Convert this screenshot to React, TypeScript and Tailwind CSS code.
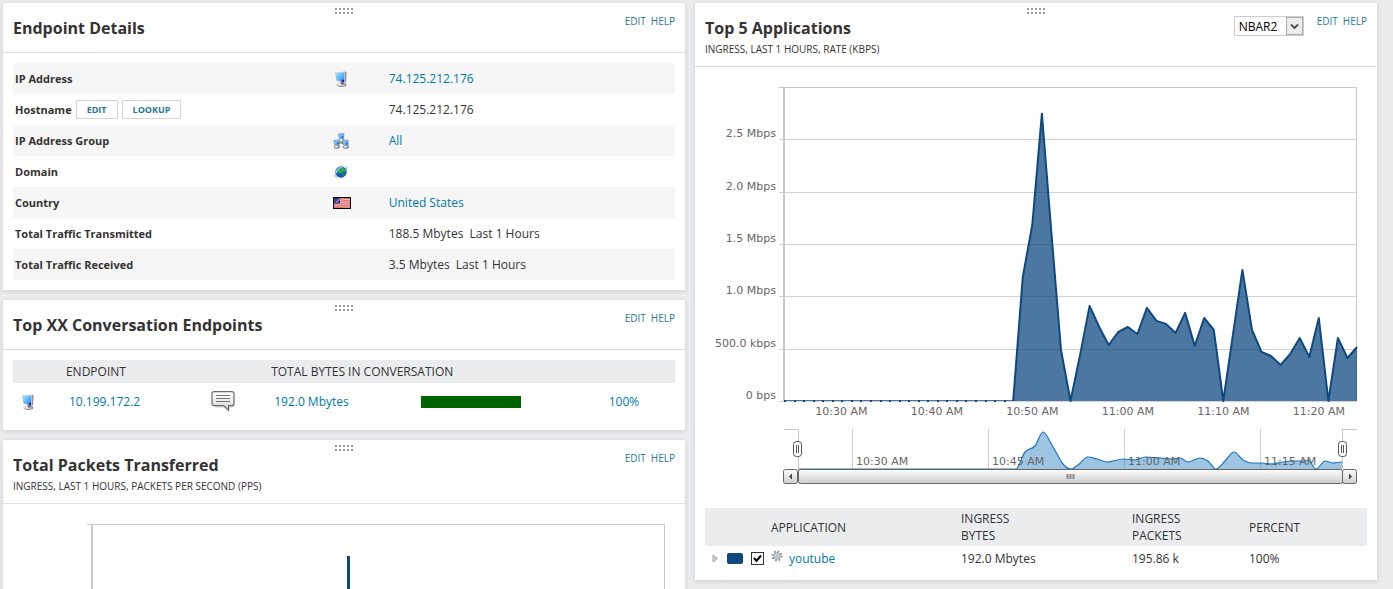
import React from 'react';

type PanelProps = {
    title: string;
    subtitle?: string;
    tools?: React.ReactNode;
    children: React.ReactNode;
};

const linkClass = 'text-[#0079aa] hover:underline';

const DragHandle: React.FC = () => (
    <svg
        className="absolute top-[5px] left-1/2 -translate-x-1/2"
        width="18"
        height="6"
        fill="#999"
        shapeRendering="crispEdges"
        aria-hidden="true"
    >
        {[0, 4, 8, 12, 16].map((x) => (
            <g key={x}>
                <rect x={x} y="0" width="2" height="2" />
                <rect x={x} y="4" width="2" height="2" />
            </g>
        ))}
    </svg>
);

const Panel: React.FC<PanelProps> = ({ title, subtitle, tools, children }) => (
    <section className="bg-white shadow-[0_1px_5px_rgba(0,0,0,0.15)]">
        <header className="relative flex justify-between border-b border-[#dfe0e1] px-[10px] pt-[13px] pb-[10px]">
            <DragHandle />
            <div>
                <h2 className="pb-[2px] text-[16px] leading-6 font-bold text-[#333]">{title}</h2>
                {subtitle && <p className="text-[10px] leading-[14px] uppercase">{subtitle}</p>}
            </div>
            <div className="flex items-start">
                {tools}
                <nav className="flex gap-[5px] text-[10px] leading-[10px] text-[#297994]">
                    <a href="#edit" className="hover:underline">EDIT</a>
                    <a href="#help" className="hover:underline">HELP</a>
                </nav>
            </div>
        </header>
        <div className="p-[10px]">{children}</div>
    </section>
);

const ComputerIcon: React.FC = () => (
    <svg width="16" height="16" viewBox="0 0 16 16" aria-hidden="true">
        <defs>
            <linearGradient id="screen" x1="0" y1="0" x2="1" y2="1">
                <stop offset="0" stopColor="#a4e2ff" />
                <stop offset="0.6" stopColor="#4fb0fa" />
                <stop offset="1" stopColor="#2a6be0" />
            </linearGradient>
        </defs>
        <ellipse cx="8.5" cy="13.8" rx="5" ry="2.1" fill="#8c8c8c" />
        <ellipse cx="7.6" cy="13.2" rx="4.2" ry="1.6" fill="#e2e2e2" />
        <path d="M7.5 10.5h3l1 2.900h-3.500z" fill="#666" />
        <path d="M11.800 .6l1.800 .8-.6 9.600-2.200 1.400z" fill="#8a9096" />
        <path d="M2 1.600L12.200 .5l-.6 11.200L3.400 10z" fill="#c2cad1" />
        <path d="M2.800 2.500l8.600-.9-.5 9.200-7-1.500z" fill="url(#screen)" />
        <path d="M8.600 8.800l2.400.5-.2 2-2-.5z" fill="#2317a8" />
    </svg>
);

const GroupIcon: React.FC = () => (
    <svg width="16" height="16" viewBox="0 0 16 16" aria-hidden="true">
        <path d="M8 6v4M8 9l-4 3M8 9l4 3" stroke="#4d4030" strokeWidth="1.4" />
        <path d="M6.8 8.4h2.4v2.2H6.8z" fill="#e5a229" />
        {[[4.8, 0], [0.2, 6.4], [9.2, 6.4]].map(([x, y]) => (
            <g key={x} transform={`translate(${x} ${y})`}>
                <ellipse cx="3.6" cy="7.4" rx="3.1" ry="2" fill="#858585" />
                <ellipse cx="3.2" cy="7.2" rx="2" ry="1.200" fill="#e4e4e4" />
                <path d="M.1 .5L6.500 .1l-.2 6.400-5.300-.7z" fill="#98a4b0" />
                <path d="M.8 1.100L5.700 .8l-.2 4.900-4-.6z" fill="#6fbcff" />
                <path d="M3.600 3l2-.4-.1 3-1.900-.3z" fill="#2d6fe0" />
            </g>
        ))}
    </svg>
);

const GlobeIcon: React.FC = () => (
    <svg width="16" height="16" viewBox="0 0 16 16" aria-hidden="true">
        <circle cx="8" cy="8" r="5.700" fill="#1757b4" />
        <path d="M2.600 8C3.600 3.800 7.600 1.600 10.800 3 8 4 5 6 3.600 10z" fill="#7cc8f7" />
        <path d="M6.600 4.400l3-.9 2.400 1.500-.2 2.600-2.200.4-.5 2-1.900-1-1.800.3-.6-2z" fill="#2fa548" />
        <path d="M9.600 9.600l2.200-.6.300 1.400-1.900 2-1.100-.8z" fill="#168a57" />
        <path d="M13.600 2.400c.9 1.600-1 4.200-1.700 5.200M2.200 10.200c-.6 2.200.2 3.200 2.600 2.400" fill="none" stroke="#55b3ee" strokeWidth="1" />
    </svg>
);

const FlagIcon: React.FC = () => (
    <svg width="18" height="12" viewBox="0 0 18 12" aria-hidden="true">
        <rect width="18" height="12" fill="#f0b9b7" />
        <path d="M1 2.2q4 1 8-.2t8-.2M1 4.4q4 1 8-.2t8-.2M1 6.6q4 1 8-.2t8-.2M1 8.8q4 1 8-.2t8-.2M1 10.6q4 .6 8-.2t8-.2" fill="none" stroke="#d76463" strokeWidth="1" />
        <path d="M1 1h6v5.600H1z" fill="#3e3f8f" />
        <path d="M3 5.600l3.400-3.800" stroke="#8d8fca" strokeWidth="1.2" />
        <rect x="0.5" y="0.5" width="17" height="11" fill="none" stroke="#000" />
    </svg>
);

const SpeechIcon: React.FC = () => (
    <svg width="24" height="22" viewBox="0 0 24 22" aria-hidden="true">
        <defs>
            <linearGradient id="bubble" x1="0" y1="0" x2="0" y2="1">
                <stop offset="0" stopColor="#fff" />
                <stop offset="1" stopColor="#d6d6d6" />
            </linearGradient>
        </defs>
        <path d="M3.500 16H13l5 4.200V16h3q2-.5 2-2" fill="none" stroke="#ccc" />
        <path
            d="M3 .6h18a2 2 0 0 1 2 2v10a2 2 0 0 1-2 2h-3.500v4.500L12.500 14.600H3a2 2 0 0 1-2-2V2.600a2 2 0 0 1 2-2z"
            fill="url(#bubble)"
            stroke="#6a6a6a"
            strokeWidth="1.2"
        />
        <path d="M5 4.500h14M5 7.500h14M5 10.500h14" stroke="#777" />
    </svg>
);

const GearIcon: React.FC = () => (
    <svg width="12" height="12" viewBox="0 0 12 12" aria-hidden="true">
        <circle cx="6" cy="6" r="4.600" fill="none" stroke="#8a9a9e" strokeWidth="2" strokeDasharray="1.800 1.810" />
        <circle cx="6" cy="6" r="3.200" fill="#dbe3e5" stroke="#8a9a9e" />
        <circle cx="6" cy="6" r="1.200" fill="#fff" stroke="#8a9a9e" strokeWidth="0.800" />
    </svg>
);

type DetailRow = {
    label: string;
    icon?: React.ReactNode;
    value?: string;
    href?: string;
    actions?: string[];
};

const details: DetailRow[] = [
    { label: 'IP Address', icon: <ComputerIcon />, value: '74.125.212.176', href: '#ip' },
    { label: 'Hostname', value: '74.125.212.176', actions: ['EDIT', 'LOOKUP'] },
    { label: 'IP Address Group', icon: <GroupIcon />, value: 'All', href: '#group' },
    { label: 'Domain', icon: <GlobeIcon /> },
    { label: 'Country', icon: <FlagIcon />, value: 'United States', href: '#country' },
    { label: 'Total Traffic Transmitted', value: '188.5 Mbytes\u00a0 Last 1 Hours' },
    { label: 'Total Traffic Received', value: '3.5 Mbytes\u00a0 Last 1 Hours' },
];

const EndpointDetails: React.FC = () => (
    <Panel title="Endpoint Details">
        <table className="w-full table-fixed">
            <colgroup>
                <col className="w-[48%]" />
                <col className="w-14" />
                <col />
            </colgroup>
            <tbody>
                {details.map((row) => (
                    <tr key={row.label} className="h-[31px] odd:bg-[#f6f6f6]">
                        <th scope="row" className="px-[2px] text-left text-[11px] font-bold">
                            <div className="flex items-center gap-1">
                                {row.label}
                                {row.actions?.map((action) => (
                                    <button
                                        key={action}
                                        type="button"
                                        className="h-[19px] border border-[#d5d5d5] bg-white px-[10px] text-[9px] font-bold text-[#297994]"
                                    >
                                        {action}
                                    </button>
                                ))}
                            </div>
                        </th>
                        <td className="px-[2px]">{row.icon}</td>
                        <td className="px-[2px]">
                            {row.href ? <a href={row.href} className={linkClass}>{row.value}</a> : row.value}
                        </td>
                    </tr>
                ))}
            </tbody>
        </table>
    </Panel>
);

const Conversations: React.FC = () => (
    <Panel title="Top XX Conversation Endpoints">
        <table className="w-full table-fixed">
            <colgroup>
                <col className="w-[8%]" />
                <col className="w-[21%]" />
                <col className="w-[10%]" />
                <col className="w-[22%]" />
                <col className="w-[29%]" />
                <col />
            </colgroup>
            <thead>
                <tr className="h-[23px] bg-[#ebecee] text-left">
                    <td />
                    <th scope="col" className="font-normal">ENDPOINT</th>
                    <td />
                    <th scope="col" colSpan={3} className="font-normal">TOTAL BYTES IN CONVERSATION</th>
                </tr>
            </thead>
            <tbody>
                <tr className="h-[37px]">
                    <td className="pl-[7px]"><ComputerIcon /></td>
                    <td className="pl-[3px]"><a href="#endpoint" className={linkClass}>10.199.172.2</a></td>
                    <td className="pl-[6px]"><SpeechIcon /></td>
                    <td className="pl-[3px]"><a href="#bytes" className={linkClass}>192.0 Mbytes</a></td>
                    <td className="pl-1"><div className="h-3 w-[100px] bg-[#006400]" /></td>
                    <td><a href="#percent" className={linkClass}>100%</a></td>
                </tr>
            </tbody>
        </table>
    </Panel>
);

const PacketsTransferred: React.FC = () => (
    <Panel title="Total Packets Transferred" subtitle="Ingress, last 1 hours, packets per second (pps)">
        <svg viewBox="0 0 662 320" className="block w-full" aria-label="Total packets transferred">
            <path d="M74 10.500H651.500V310" fill="none" stroke="#c8c8c8" />
            <path d="M79 10V310" stroke="#c8c8c8" strokeWidth="2" />
            <rect x="334" y="42" width="3" height="268" fill="#0f4980" />
        </svg>
    </Panel>
);

// One sample a minute, in kbps. The first 24 minutes are idle.
const rates = [
    ...Array<number>(25).fill(0),
    1185, 1683, 2744, 1606, 488, 0, 440, 908, 707, 535, 660, 707,
    640, 889, 765, 736, 650, 841, 526, 793, 679, 0, 631, 1252,
    679, 468, 430, 344, 449, 602, 421, 793, 0, 602, 411, 516,
];

const plot = { left: 79, right: 652, base: 324 };
const stepX = (plot.right - plot.left) / (rates.length - 1);
const rateX = (i: number) => plot.left + i * stepX;
const rateY = (kbps: number) => plot.base - (kbps * 52.35) / 500;
const linePath = (from: number) =>
    rates
        .slice(from)
        .map((r, i) => `${i ? 'L' : 'M'}${rateX(from + i).toFixed(1)} ${rateY(r).toFixed(1)}`)
        .join('');

const yTicks = [
    { kbps: 0, label: '0 bps' },
    { kbps: 500, label: '500.0 kbps' },
    { kbps: 1000, label: '1.0 Mbps' },
    { kbps: 1500, label: '1.5 Mbps' },
    { kbps: 2000, label: '2.0 Mbps' },
    { kbps: 2500, label: '2.5 Mbps' },
];

const xTicks = ['10:30 AM', '10:40 AM', '10:50 AM', '11:00 AM', '11:10 AM', '11:20 AM'];

const overviewTicks = [
    { x: 147.5, label: '10:30 AM' },
    { x: 283.5, label: '10:45 AM' },
    { x: 419.5, label: '11:00 AM' },
    { x: 555.5, label: '11:15 AM' },
];

const overview: [number, number][] = [
    [93, 392], [311, 392], [320, 375], [330, 369], [338, 355], [347, 368], [358, 387],
    [366, 392], [373, 388], [383, 380], [392, 382], [402, 385], [418, 382], [430, 383],
    [440, 380], [455, 381], [467, 382], [475, 381], [483, 385], [495, 381], [503, 384],
    [511, 392], [520, 384], [529, 375], [538, 383], [547, 386], [557, 386], [567, 387],
    [578, 385], [588, 384], [597, 384], [603, 383], [611, 392], [620, 384], [628, 386],
    [637, 385],
];

// Flat tangents at peaks and dips keep the curve from overshooting.
const slopeAt = (k: number) => {
    const prev = overview[k - 1];
    const next = overview[k + 1];
    if (!prev || !next) return 0;
    const y = overview[k][1];
    if ((y - prev[1]) * (next[1] - y) <= 0) return 0;
    return (next[1] - prev[1]) / (next[0] - prev[0]);
};

const overviewLine = overview
    .map(([x, y], i) => {
        if (i === 0) return `M${x} ${y}`;
        const [px, py] = overview[i - 1];
        const third = (x - px) / 3;
        const y1 = py + slopeAt(i - 1) * third;
        const y2 = y - slopeAt(i) * third;
        return `C${(px + third).toFixed(1)} ${y1.toFixed(1)} ${(x - third).toFixed(1)} ${y2.toFixed(1)} ${x} ${y}`;
    })
    .join('');

const ApplicationsChart: React.FC = () => (
    <svg
        viewBox="0 0 662 431"
        className="block w-full font-['DejaVu_Sans',sans-serif] text-[11px]"
        fill="#666"
        aria-label="Top 5 applications, ingress rate"
    >
        <defs>
            <linearGradient id="scroll" x1="0" y1="0" x2="0" y2="1">
                <stop offset="0" stopColor="#fff" />
                <stop offset="1" stopColor="#ccc" />
            </linearGradient>
        </defs>

        <path d="M74 10.500H651.500V324" fill="none" stroke="#c8c8c8" />
        {yTicks.map(({ kbps, label }) => {
            const y = Math.round(rateY(kbps)) + 0.5;
            return (
                <g key={label}>
                    <path d={`M74 ${y}H652`} stroke="#d2d2d2" />
                    <text x="71" y={y - 2.5} textAnchor="end">{label}</text>
                </g>
            );
        })}
        <path d="M79 10V324" stroke="#c8c8c8" strokeWidth="2" />
        <path d={`${linePath(0)}V${plot.base}H${plot.left}Z`} fill="#0f4980" fillOpacity="0.75" />
        <path d={`M79 ${plot.base - 0.5}H309`} stroke="#4b769f" />
        {rates.slice(0, 24).map((_, i) => (
            <rect key={i} x={Math.round(rateX(i))} y={plot.base - 1} width="2" height="2" fill="#0f4980" />
        ))}
        <path d={linePath(24)} fill="none" stroke="#0f4980" strokeWidth="2" strokeLinejoin="round" />
        {xTicks.map((label, i) => (
            <text key={label} x={rateX(6 + i * 10)} y="338" textAnchor="middle">{label}</text>
        ))}

        {/* overview strip */}
        {overviewTicks.map(({ x, label }) => (
            <path key={label} d={`M${x} 352V392`} stroke="#d2d2d2" />
        ))}
        <path d={`${overviewLine}V392Z`} fill="#1c77bd" fillOpacity="0.43" />
        <path d={overviewLine} fill="none" stroke="#1c77bd" strokeWidth="1.200" />
        {overviewTicks.map(({ x, label }) => (
            <text key={label} x={x + 3.5} y="388">{label}</text>
        ))}
        <path d="M79 352.500H93.500V392M652 352.500H637.500V392" fill="none" stroke="#c8c8c8" />
        {[93, 638].map((x) => (
            <g key={x} stroke="#555">
                <rect x={x - 4.5} y="364.500" width="8" height="15" rx="3" fill="#fff" />
                <path d={`M${x - 1.5} 368V376M${x + 0.5} 368V376`} />
            </g>
        ))}

        {/* scrollbar */}
        <g fill="url(#scroll)" stroke="#666">
            <rect x="93.500" y="392.500" width="544" height="14" rx="2" />
            <rect x="78.500" y="392.500" width="14" height="14" rx="2" />
            <rect x="637.500" y="392.500" width="14" height="14" rx="2" />
        </g>
        <path d="M87 396.500v6l-3-3zM644 396.500v6l3-3z" fill="#444" />
        <path d="M362.500 397v5M365.500 397v5M368.500 397v5" stroke="#888" strokeWidth="2" />
    </svg>
);

const SourceSelect: React.FC = () => (
    <div className="relative mr-[13px]">
        <select
            aria-label="Application source"
            defaultValue="NBAR2"
            className="h-5 w-[70px] appearance-none border border-[#ccc] bg-white pl-1 text-[12px] text-black outline-none"
        >
            <option>NBAR2</option>
            <option>NetFlow</option>
        </select>
        <svg className="pointer-events-none absolute top-px right-px" width="17" height="18" aria-hidden="true">
            <rect x="0.500" y="0.500" width="16" height="17" fill="#ececec" stroke="#aaa" />
            <path d="M5 7.500l3.500 3.500 3.500-3.500" fill="none" stroke="#555" strokeWidth="2" />
        </svg>
    </div>
);

const TopApplications: React.FC = () => (
    <Panel title="Top 5 Applications" subtitle="Ingress, last 1 hours, rate (kbps)" tools={<SourceSelect />}>
        <ApplicationsChart />
        <table className="w-full table-fixed leading-[17px]">
            <colgroup>
                <col className="w-[66px]" />
                <col />
                <col className="w-[171px]" />
                <col className="w-[117px]" />
                <col className="w-[118px]" />
            </colgroup>
            <thead>
                <tr className="h-[38px] bg-[#ebecee] text-left uppercase">
                    <td />
                    <th scope="col" className="font-normal">Application</th>
                    <th scope="col" className="font-normal">Ingress<br />Bytes</th>
                    <th scope="col" className="font-normal">Ingress<br />Packets</th>
                    <th scope="col" className="font-normal">Percent</th>
                </tr>
            </thead>
            <tbody>
                <tr className="h-6">
                    <td>
                        <div className="flex items-center pl-[7px]">
                            <svg width="7" height="9" className="mr-2" aria-hidden="true">
                                <path d="M1 1l4.500 3.500L1 8z" fill="#ccc" stroke="#aaa" />
                            </svg>
                            <span className="mr-2 h-[11px] w-4 rounded-[2px] bg-[#0f4980]" />
                            <input
                                type="checkbox"
                                aria-label="Show youtube"
                                defaultChecked
                                className="peer size-[13px] shrink-0 appearance-none border border-[#333] bg-white"
                            />
                            <svg
                                className="pointer-events-none invisible -ml-[13px] shrink-0 peer-checked:visible"
                                width="13"
                                height="13"
                                aria-hidden="true"
                            >
                                <path d="M3 6l2.500 3L10 3.500" fill="none" stroke="#000" strokeWidth="2" />
                            </svg>
                        </div>
                    </td>
                    <td>
                        <div className="flex gap-[6px]">
                            <GearIcon />
                            <a href="#youtube" className={linkClass}>youtube</a>
                        </div>
                    </td>
                    <td>192.0 Mbytes</td>
                    <td>195.86 k</td>
                    <td>100%</td>
                </tr>
            </tbody>
        </table>
    </Panel>
);

const App: React.FC = () => (
    <main className="h-screen overflow-hidden bg-[#ebecee] font-['Open_Sans',sans-serif] text-[12px] leading-[17px] text-[#333]">
        <div className="grid grid-cols-2 items-start gap-[10px] pt-[3px] pr-4 pl-[3px]">
            <div className="flex flex-col gap-[10px]">
                <EndpointDetails />
                <Conversations />
                <PacketsTransferred />
            </div>
            <TopApplications />
        </div>
    </main>
);

export default App;
